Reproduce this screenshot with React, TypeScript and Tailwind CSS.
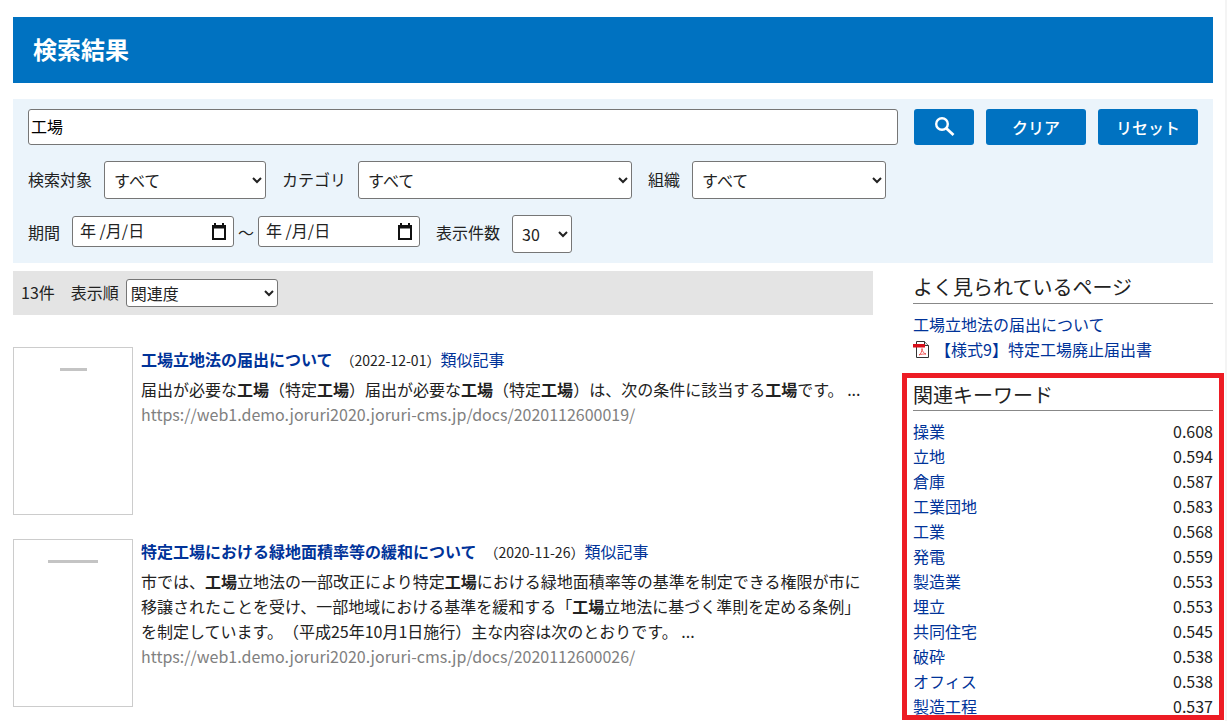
const keywords = [
  ["操業", "0.608"],
  ["立地", "0.594"],
  ["倉庫", "0.587"],
  ["工業団地", "0.583"],
  ["工業", "0.568"],
  ["発電", "0.559"],
  ["製造業", "0.553"],
  ["埋立", "0.553"],
  ["共同住宅", "0.545"],
  ["破砕", "0.538"],
  ["オフィス", "0.538"],
  ["製造工程", "0.537"],
];

const DateBox = () => (
  <div className="mt-[1px] flex h-[31px] w-[162px] items-center justify-between rounded-[3px] border border-[#767676] bg-white pb-[1px] pl-[7px] pr-[6px] text-[16px]">
    <span className="pb-[2px]">年 /月/日</span>
    <svg width="16" height="18" viewBox="0 0 16 18" className="mb-[1px]">
      <path d="M1 3h14v15H1z M3 6.500v9.500h10V6.500z" fill="#111" fillRule="evenodd" />
      <path d="M3 1h2v3H3z M11 1h2v3h-2z" fill="#111" />
    </svg>
  </div>
);

const Pick = ({ cls, value }: { cls: string; value: string }) => (
  <select defaultValue={value} className={`${cls} rounded-[3px] border border-[#767676] bg-white text-[16px] text-[#222]`}>
    <option>{value}</option>
  </select>
);

const Thumb = ({ bar }: { bar: string }) => (
  <div className="flex h-[168px] w-[120px] shrink-0 justify-center border border-[#ccc] bg-white pt-[20px]">
    <div className={`${bar} h-[3px] bg-[#c4c4c4] blur-[0.7px]`} />
  </div>
);

const App = () => {
  return (
    <div className="h-[721px] overflow-hidden border-r-2 border-[#f4f4f4] bg-white px-[13px] pt-[17px] font-['Noto_Sans_CJK_JP',sans-serif] text-[16px] text-[#222] [text-spacing-trim:space-all]">
      <div className="w-[1200px]">
        <h1 className="flex h-[66px] items-center bg-[#0072c1] px-[20px] pb-[2px] text-[24px] font-bold text-white">検索結果</h1>

        <div className="mt-[16px] h-[164px] bg-[#ebf4fb] px-[15px] pt-[10px]">
          <div className="flex items-center">
            <input
              defaultValue="工場"
              className="h-[36px] w-[870px] rounded-[3px] border border-[#767676] bg-white px-[2px] pb-[2px] text-[16px] text-black"
            />
            <button className="ml-[16px] flex h-[36px] w-[60px] items-center justify-center rounded-[3px] bg-[#0072c1] text-white">
              <svg width="20" height="20" viewBox="0 0 20 20" fill="none" stroke="currentColor" className="translate-x-px -translate-y-[0.5px]">
                <circle cx="7" cy="7.500" r="5.800" strokeWidth="2.400" />
                <path d="M11.500 12l7 6.500" strokeWidth="2.800" />
              </svg>
            </button>
            <button className="ml-[12px] h-[36px] w-[100px] rounded-[3px] bg-[#0072c1] text-[16px] font-medium text-white">クリア</button>
            <button className="ml-[12px] h-[36px] w-[100px] rounded-[3px] bg-[#0072c1] text-[16px] font-medium text-white">リセット</button>
          </div>

          <div className="mt-[16px] flex items-center">
            <span className="mr-[12px] pb-[2px]">検索対象</span>
            <Pick cls="h-[38px] w-[162px] pl-[5px] pr-[3px]" value="すべて" />
            <span className="ml-[16px] mr-[12px] pb-[2px]">カテゴリ</span>
            <Pick cls="h-[38px] w-[274px] pl-[5px] pr-[3px]" value="すべて" />
            <span className="ml-[16px] mr-[12px] pb-[2px]">組織</span>
            <Pick cls="h-[38px] w-[194px] pl-[5px] pr-[3px]" value="すべて" />
          </div>

          <div className="mt-[16px] flex items-start">
            <span className="mr-[12px] mt-[5px]">期間</span>
            <DateBox />
            <span className="mt-[5px] w-[24px] text-center">～</span>
            <DateBox />
            <span className="ml-[16px] mr-[12px] mt-[5px]">表示件数</span>
            <Pick cls="h-[38px] w-[60px] pl-[5px] pr-[1px]" value="30" />
          </div>
        </div>

        <div className="mt-[8px] flex gap-[40px]">
          <main className="w-[860px]">
            <div className="flex h-[44px] items-center bg-[#e4e4e4] pl-[8px]">
              <span className="pb-[3px]">13件</span>
              <span className="ml-[16px] mr-[7px] pb-[3px]">表示順</span>
              <Pick cls="h-[28px] w-[152px] pr-[1px]" value="関連度" />
            </div>

            <article className="mt-[32px] flex gap-[8px]">
              <Thumb bar="w-[27px]" />
              <div className="leading-[25px]">
                <div>
                  <a className="font-bold text-[#003399]">工場立地法の届出について</a>
                  <span className="ml-[8px] text-[14px]">（2022-12-01）</span>
                  <a className="text-[#003399]">類似記事</a>
                </div>
                <p className="mt-[4px]">
                  届出が必要な<b>工場</b>（特定<b>工場</b>）届出が必要な<b>工場</b>（特定<b>工場</b>）は、次の条件に該当する<b>工場</b>です。 ...
                </p>
                <p className="text-[#808080]">https://web1.demo.joruri2020.joruri-cms.jp/docs/2020112600019/</p>
              </div>
            </article>

            <article className="mt-[24px] flex gap-[8px]">
              <Thumb bar="w-[50px]" />
              <div className="leading-[25px]">
                <div>
                  <a className="font-bold text-[#003399]">特定工場における緑地面積率等の緩和について</a>
                  <span className="ml-[8px] text-[14px]">（2020-11-26）</span>
                  <a className="text-[#003399]">類似記事</a>
                </div>
                <p className="mt-[4px]">
                  市では、<b>工場</b>立地法の一部改正により特定<b>工場</b>における緑地面積率等の基準を制定できる権限が市に移譲されたことを受け、一部地域における基準を緩和する「<b>工場</b>立地法に基づく準則を定める条例」を制定しています。（平成25年10月1日施行）主な内容は次のとおりです。 ...
                </p>
                <p className="text-[#808080]">https://web1.demo.joruri2020.joruri-cms.jp/docs/2020112600026/</p>
              </div>
            </article>
          </main>

          <aside className="w-[300px]">
            <h2 className="border-b border-[#888] pb-[2px] pt-[1px] text-[20px] leading-[29px] font-normal">よく見られているページ</h2>
            <ul className="mt-[8px] text-[#003399] leading-[25px]">
              <li>工場立地法の届出について</li>
              <li className="flex items-center">
                <svg width="16" height="17" viewBox="0 0 16 17" className="mr-[6px]">
                  <path d="M3.500 .5h8l4 4v12h-12z" fill="#fff" stroke="#333" />
                  <path d="M11.500 .5v4h4" fill="#ddd" stroke="#333" />
                  <path d="M0 3h12v3.500H0z" fill="#d8101a" />
                  <path d="M6 14c2-1 3-4 3-6.500 0 3 2 5 4 5.500-2 0-5 0-7 1z" fill="none" stroke="#e33" strokeWidth=".8" />
                </svg>
                【様式9】特定工場廃止届出書
              </li>
            </ul>

            <section className="-ml-[11px] -mr-[11px] mt-[11px] h-[347px] overflow-hidden border-[5px] border-[#ed1c24] px-[6px] pt-[2px]">
              <h2 className="border-b border-[#888] pb-[1px] text-[20px] leading-[29px] font-normal">関連キーワード</h2>
              <ul className="mt-[8px] leading-[25px]">
                {keywords.map(([word, score]) => (
                  <li key={word} className="flex justify-between">
                    <a className="text-[#003399]">{word}</a>
                    <span>{score}</span>
                  </li>
                ))}
              </ul>
            </section>
          </aside>
        </div>
      </div>
    </div>
  );
};

export default App;
